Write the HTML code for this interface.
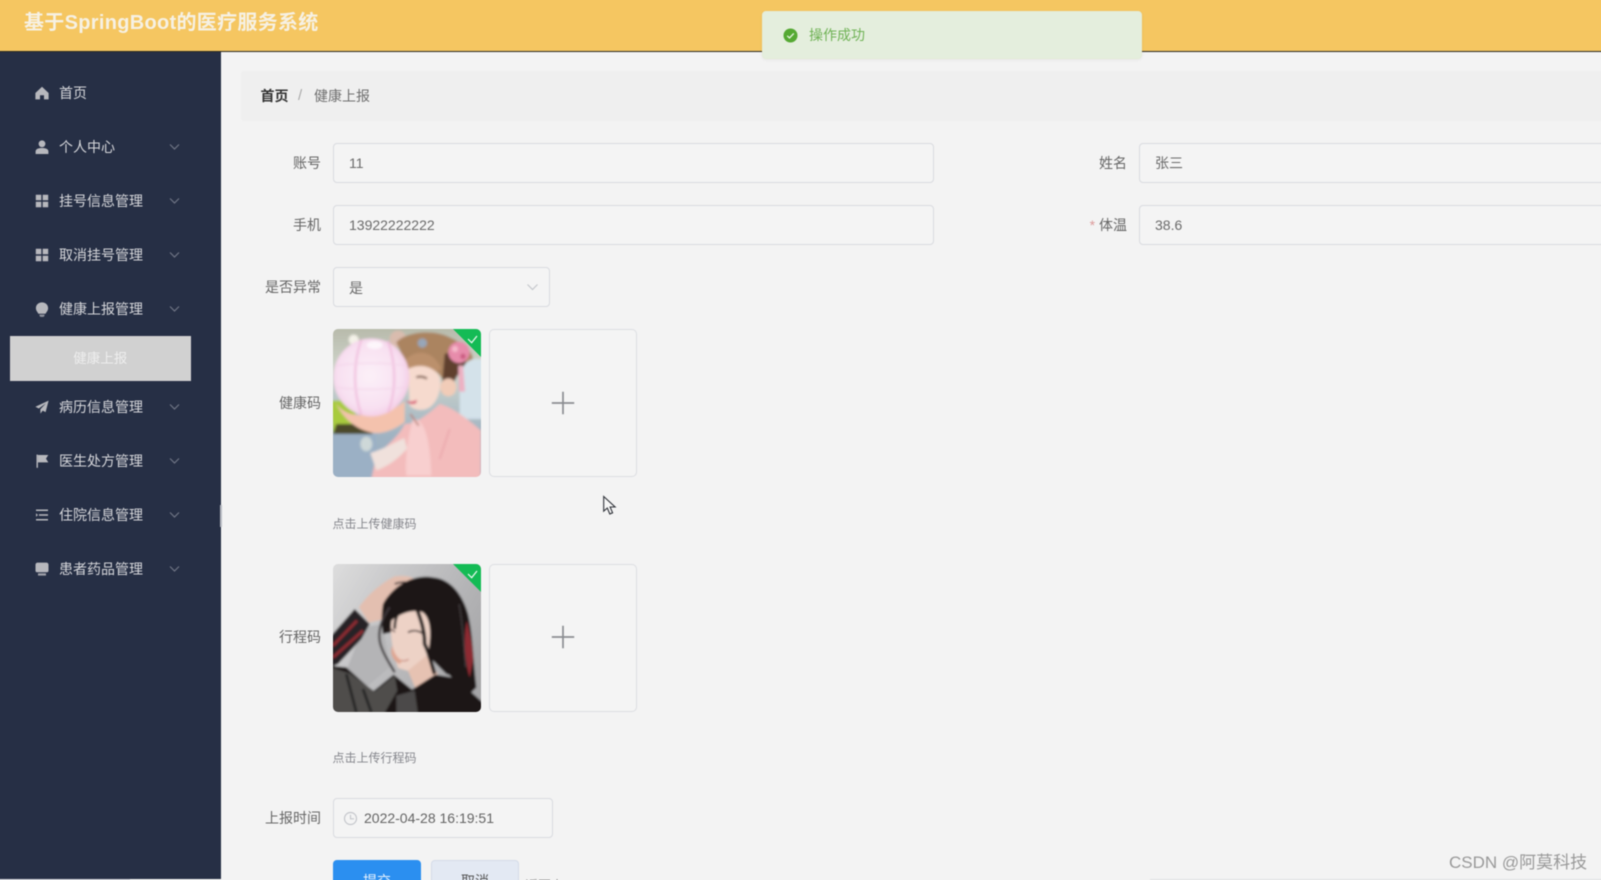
<!DOCTYPE html>
<html lang="zh-CN">
<head>
<meta charset="utf-8">
<title>基于SpringBoot的医疗服务系统</title>
<style>
*{box-sizing:border-box}
html,body{margin:0;padding:0;width:1601px;height:880px;overflow:hidden;background:#f3f3f3}
body{font-family:"Liberation Sans","Noto Sans CJK SC",sans-serif;font-size:14px;color:#606266;position:relative}
#wrap{position:absolute;left:-10px;top:-10px;width:1621px;height:900px;overflow:hidden;filter:blur(.42px);background:#f3f3f3}
#in{position:absolute;left:10px;top:10px;width:1601px;height:880px}
.a{position:absolute;white-space:nowrap}
.header{left:-10px;top:-10px;width:1621px;height:62px;background:#f5c661;border-bottom:1px solid #2b2a22}
.title{left:24px;top:9px;font-size:20px;line-height:29px;font-weight:bold;color:#f6f1e4;letter-spacing:.3px}
.side{left:-10px;top:52px;width:230.5px;height:827px;background:#262f45}
.mi{left:59px;font-size:14px;line-height:20px;color:#d6d7db}
.ic{left:35px;width:14px;height:14px}
.chev{left:168px;width:13px;height:8px}
.sub{left:10px;top:336px;width:180.5px;height:44.5px;background:#d1d1d1;color:#eeeeee;text-align:center;line-height:45px;font-size:13.5px}
.crumb{left:241px;top:71px;width:1370px;height:50px;background:#efefef;border-radius:3px}
.lab{font-size:14px;line-height:20px;color:#666;text-align:right;width:100px}
.inp{height:40px;border:1px solid #d9dbdf;border-radius:4px;background:#f4f4f4;color:#6a6a6a;line-height:39px;padding-left:15px;font-size:14px}
.card{width:148px;height:148px;border:1px solid #dcdee2;border-radius:5px;background:#f4f4f4}
.thumb{width:148px;height:148px;border-radius:5px;overflow:hidden;display:block}
.hint{font-size:12px;line-height:18px;color:#85868c}
</style>
</head>
<body>
<div id="wrap"><div id="in">
<div class="a header"></div>
<div class="a title">基于SpringBoot的医疗服务系统</div>
<div class="a side"></div>
<div class="a" style="left:220px;top:505px;width:1.500px;height:22px;background:#b8bbc3"></div>

<svg class="a ic" style="top:86px" viewBox="0 0 14 14"><path d="M7 .8 13.600 7v6.400H9V9.200H5v4.200H.4V7z" fill="#b7b8bd"/></svg>
<div class="a mi" style="top:83px">首页</div>

<svg class="a ic" style="top:140px" viewBox="0 0 14 14"><circle cx="7" cy="3.800" r="3.400" fill="#b7b8bd"/><path d="M.6 14v-2.600C.6 9.200 3 8 7 8s6.400 1.200 6.400 3.400V14z" fill="#b7b8bd"/></svg>
<div class="a mi" style="top:137px">个人中心</div>
<svg class="a chev" style="top:143px" viewBox="0 0 13 8"><path d="M2 1.500 6.500 6 11 1.500" fill="none" stroke="#6f7585" stroke-width="1.200"/></svg>

<svg class="a ic" style="top:194px" viewBox="0 0 14 14"><path d="M.8.8h5.500v5.500H.8zM7.700.8h5.500v5.500H7.700zM.8 7.700h5.500v5.500H.8zM7.700 7.700h5.500v5.500H7.700z" fill="#b7b8bd"/></svg>
<div class="a mi" style="top:191px">挂号信息管理</div>
<svg class="a chev" style="top:197px" viewBox="0 0 13 8"><path d="M2 1.500 6.500 6 11 1.500" fill="none" stroke="#6f7585" stroke-width="1.200"/></svg>

<svg class="a ic" style="top:248px" viewBox="0 0 14 14"><path d="M.8.8h5.500v5.500H.8zM7.700.8h5.500v5.500H7.700zM.8 7.700h5.500v5.500H.8zM7.700 7.700h5.500v5.500H7.700z" fill="#b7b8bd"/></svg>
<div class="a mi" style="top:245px">取消挂号管理</div>
<svg class="a chev" style="top:251px" viewBox="0 0 13 8"><path d="M2 1.500 6.500 6 11 1.500" fill="none" stroke="#6f7585" stroke-width="1.200"/></svg>

<svg class="a ic" style="top:302px;height:15px" viewBox="0 0 14 15"><path d="M7 .4C3.300.4.900 3 .9 6.100c0 2.600 1.700 4 2.500 5.600h7.200c.8-1.600 2.500-3 2.500-5.600C13.100 3 10.700.4 7 .4z" fill="#b7b8bd"/><path d="M4.500 12.600h5v1.300l-1 1h-3l-1-1z" fill="#8f929c"/></svg>
<div class="a mi" style="top:299px">健康上报管理</div>
<svg class="a chev" style="top:305px" viewBox="0 0 13 8"><path d="M2 1.500 6.500 6 11 1.500" fill="none" stroke="#6f7585" stroke-width="1.200"/></svg>

<div class="a sub">健康上报</div>

<svg class="a ic" style="top:400px" viewBox="0 0 14 14"><path d="M13.600.6 .4 6.800l3.400 1.700L11 3.300 5.400 9.300V13.600l2.300-3 2.900 1.500z" fill="#b7b8bd"/></svg>
<div class="a mi" style="top:397px">病历信息管理</div>
<svg class="a chev" style="top:403px" viewBox="0 0 13 8"><path d="M2 1.500 6.500 6 11 1.500" fill="none" stroke="#6f7585" stroke-width="1.200"/></svg>

<svg class="a ic" style="top:454px" viewBox="0 0 14 14"><path d="M1.500.6h1.400v13.200H1.500z" fill="#b7b8bd"/><path d="M2.900 1H13.300l-2.300 3.600 2.300 3.800H2.900z" fill="#b7b8bd"/></svg>
<div class="a mi" style="top:451px">医生处方管理</div>
<svg class="a chev" style="top:457px" viewBox="0 0 13 8"><path d="M2 1.500 6.500 6 11 1.500" fill="none" stroke="#6f7585" stroke-width="1.200"/></svg>

<svg class="a ic" style="top:508px" viewBox="0 0 14 14"><path d="M1 2.200h12M4 7h9M1 11.800h12" stroke="#b7b8bd" stroke-width="1.500" fill="none"/><path d="M1 5.300 3 7 1 8.700z" fill="#b7b8bd"/></svg>
<div class="a mi" style="top:505px">住院信息管理</div>
<svg class="a chev" style="top:511px" viewBox="0 0 13 8"><path d="M2 1.500 6.500 6 11 1.500" fill="none" stroke="#6f7585" stroke-width="1.200"/></svg>

<svg class="a ic" style="top:562px" viewBox="0 0 14 14"><path d="M2.500.6h9c1.100 0 2 .9 2 2v6.200c0 .9-.7 1.500-1.500 1.500H2c-.8 0-1.500-.6-1.500-1.500V2.600c0-1.100.9-2 2-2z" fill="#b7b8bd"/><path d="M3 11.300h8v2.300H3z" fill="#9ea0a8"/></svg>
<div class="a mi" style="top:559px">患者药品管理</div>
<svg class="a chev" style="top:565px" viewBox="0 0 13 8"><path d="M2 1.500 6.500 6 11 1.500" fill="none" stroke="#6f7585" stroke-width="1.200"/></svg>

<div class="a crumb"></div>
<div class="a" style="left:260.500px;top:86px;line-height:20px;font-weight:bold;color:#333">首页</div>
<div class="a" style="left:298px;top:86px;line-height:20px;color:#aaa;font-size:15px">/</div>
<div class="a" style="left:314px;top:86px;line-height:20px;color:#6e6e6e">健康上报</div>

<div class="a lab" style="left:221px;top:153px">账号</div>
<div class="a inp" style="left:333px;top:143px;width:601px">11</div>
<div class="a lab" style="left:1027px;top:153px">姓名</div>
<div class="a inp" style="left:1139px;top:143px;width:480px">张三</div>

<div class="a lab" style="left:221px;top:215px">手机</div>
<div class="a inp" style="left:333px;top:205px;width:601px">13922222222</div>
<div class="a lab" style="left:1027px;top:215px"><span style="color:#dc9a9a">*</span> 体温</div>
<div class="a inp" style="left:1139px;top:205px;width:480px">38.6</div>

<div class="a lab" style="left:221px;top:277px">是否异常</div>
<div class="a inp" style="left:333px;top:267px;width:217px;line-height:40px">是</div>
<svg class="a" style="left:526px;top:283px" width="13" height="9" viewBox="0 0 13 9"><path d="M1.500 1.500 6.500 6.500 11.500 1.500" fill="none" stroke="#c5c7cc" stroke-width="1.200"/></svg>

<div class="a lab" style="left:221px;top:393px">健康码</div>
<svg class="a thumb" style="left:333px;top:329px" viewBox="0 0 444 444">
<defs>
<linearGradient id="g1" x1="0" y1="0" x2="0" y2="1"><stop offset="0" stop-color="#b4b6a6"/><stop offset=".3" stop-color="#cfd6cc"/><stop offset=".7" stop-color="#a0b3c2"/><stop offset="1" stop-color="#93aac2"/></linearGradient>
<radialGradient id="g2" cx=".48" cy=".48" r=".56"><stop offset="0" stop-color="#fbf0f8"/><stop offset=".75" stop-color="#f8e0f1"/><stop offset="1" stop-color="#f2c9e3"/></radialGradient>
<linearGradient id="g3" x1="0" y1="0" x2="1" y2=".6"><stop offset="0" stop-color="#e0e0e0"/><stop offset=".5" stop-color="#c0c0c2"/><stop offset="1" stop-color="#a5a5a7"/></linearGradient>
<filter id="b1"><feGaussianBlur stdDeviation="4"/></filter>
<filter id="b2"><feGaussianBlur stdDeviation="2.800"/></filter>
</defs>
<g filter="url(#b1)">
<rect x="-20" y="-20" width="484" height="484" fill="url(#g1)"/>
<circle cx="62" cy="32" r="15" fill="#f4f2e8"/>
<path d="M380 90h70v180h-70z" fill="#d4e2ea"/>
<path d="M-10 215h65l25 80-80 20z" fill="#a8cb3e"/>
<path d="M10 285h80l30 30H0z" fill="#4b4a2a"/>
<path d="M0 315h130v135H0z" fill="#9bb0c5"/>
<ellipse cx="100" cy="345" rx="18" ry="22" fill="#ced8d8"/>
<circle cx="195" cy="30" r="25" fill="#d9bcae"/>
<path d="M190 40C220 8 300 0 350 25c40 18 68 40 70 65-20 8-30 18-40 35l-35 60-20-40C300 110 250 90 215 95z" fill="#ab8461"/>
<path d="M335 75c20-10 50-5 65 25l-30 45-20 40-25 5z" fill="#5e3f2e"/>
<path d="M215 95c30-35 85-35 110 25l-20 10C280 105 250 110 225 125z" fill="#bb906c"/>
<circle cx="268" cy="42" r="14" fill="#98a6b8"/>
<path d="M225 120c35-18 80-8 95 25 6 30-4 72-30 90-20 12-45 10-60-5z" fill="#f6dace"/>
<ellipse cx="346" cy="175" rx="24" ry="27" fill="#f1ccb8"/>
<path d="M320 225c40 10 90 50 124 80v145H115l15-70c30-30 70-60 85-95 30 0 60-20 105-60z" fill="#f3bcbc"/>
<path d="M240 270c30 0 50 40 55 170h-75c-5-50 5-120 20-170z" fill="#f8cfcf"/>
<path d="M232 255l25 35" stroke="#b77f76" stroke-width="5" fill="none"/>
<path d="M350 300l-30 90" stroke="#e79aa2" stroke-width="3" fill="none"/>
<path d="M8 222c20 30 55 40 90 35 45 0 85-15 117-40v62c-25 20-60 35-90 33-45-5-90-35-117-90z" fill="#f4c2ad"/>
<path d="M112 372c35-10 70-30 102-45l8 32c-25 30-60 55-92 65z" fill="#f0e1dc"/>
<ellipse cx="115" cy="145" rx="114" ry="117" fill="url(#g2)"/>
<path d="M85 32c-25 70-25 155 0 225M165 36c25 70 25 150 0 215" stroke="#f0bcdc" stroke-width="6" fill="none"/>
<path d="M10 110c70-10 140-10 210 0M5 175c70 8 140 8 215 0" stroke="#f3d2e8" stroke-width="3" fill="none"/>
<ellipse cx="125" cy="48" rx="24" ry="12" fill="#fdf6fb"/>
<circle cx="378" cy="70" r="32" fill="#e78cab"/>
<circle cx="366" cy="60" r="9" fill="#f5bacb"/><circle cx="390" cy="82" r="8" fill="#c9587f"/>
<path d="M376 110h14l6 78h-18z" fill="#edb0c2"/>
<path d="M218 214c12 6 24 4 34-2l-2 10c-10 6-24 4-32-8z" fill="#d9617a"/>
<path d="M250 145c10-4 24-2 32 4" stroke="#6b4636" stroke-width="6" fill="none"/>
</g>
<path d="M360 0h84v84z" fill="#14bb55"/>
<path d="M405 30l11 11 16-20" fill="none" stroke="#eef9f2" stroke-width="3.600"/>
</svg>
<div class="a card" style="left:489px;top:329px"></div>
<svg class="a" style="left:551px;top:391px" width="24" height="24" viewBox="0 0 24 24"><path d="M12 .8v22.400M.8 12h22.400" stroke="#8b8d91" stroke-width="1.700"/></svg>
<svg class="a" style="left:602px;top:495px" width="16" height="21" viewBox="0 0 16 21"><path d="M1.700 1.500V16.200l3.600-3.200 2.500 6 2.800-1.200-2.500-5.800h5z" fill="#f6f6f6" stroke="#30333a" stroke-width="1.100"/></svg>
<div class="a hint" style="left:332.500px;top:515px">点击上传健康码</div>

<div class="a lab" style="left:221px;top:627px">行程码</div>
<svg class="a thumb" style="left:333px;top:563.500px" viewBox="0 0 444 444">
<g filter="url(#b2)">
<rect x="-20" y="-20" width="484" height="484" fill="url(#g3)"/>
<path d="M90 190l60-10 20 130-70 60-60-50z" fill="#b4b4b6"/>
<path d="M78 130c20-30 55-65 105-92 30-6 60 0 68 14l-8 44-60 22-40 50-35 8z" fill="#e3bfb0"/>
<path d="M185 60c20-8 40-6 65 0M175 95c20-6 40-8 62-8" stroke="#3e3033" stroke-width="5" fill="none"/>
<path d="M-10 220l75-85 45 45-25 45-70 75-25 10z" fill="#272325"/>
<path d="M0 245l72-75M0 280l90-80" stroke="#8b2c31" stroke-width="9" fill="none"/>
<path d="M150 120c30-55 90-90 150-80 55 5 90 55 105 110 15 60 15 135 25 220l-20 20c-20-20-50-45-80-75-20-30-15-90-30-130-15-30-40-45-70-40-30 4-50 30-55 60l-25 5c-5-30-5-60 0-90z" fill="#1c1719"/>
<path d="M280 130 395 150 415 350 340 330 285 275z" fill="#1c1719"/>
<path d="M175 170c30-25 70-35 95-25 25 20 25 70 15 125-10 30-30 45-55 52l-35-10c-15-45-25-100-20-142z" fill="#edd2c6"/>
<path d="M225 320l55-45 35 55-65 50z" fill="#e6c2b2"/>
<path d="M178 245c4 20 14 38 30 45l-8 10c-22-10-30-35-22-55z" fill="#dfa692"/>
<path d="M225 205c15-8 30-6 46 4" stroke="#2f2020" stroke-width="5" fill="none"/>
<path d="M160 198c8-4 18-2 26 6" stroke="#2f2020" stroke-width="4" fill="none"/>
<path d="M205 290c10 2 16 0 22-4" stroke="#c27d72" stroke-width="3" fill="none"/>
<path d="M250 130c15 40 25 70 25 110 15 30 20 60 30 90" stroke="#1c1719" stroke-width="11" fill="none"/>
<path d="M170 130c-20 30-35 60-30 100 5 30 25 60 45 95" stroke="#3b3537" stroke-width="7" fill="none"/>
<path d="M205 130c-15 25-20 40-20 65" stroke="#1c1719" stroke-width="8" fill="none"/>
<path d="M-10 305l50 5 80 72 62-50 55 45 70-45 60 10 90 80v40H-10z" fill="#1b1819"/>
<path d="M-10 310l60 18 75 55 60-48 8 45-40 70H-10z" fill="#4f4e4c"/>
<path d="M40 330l30 115M90 375l25 70" stroke="#242223" stroke-width="8" fill="none"/>
<path d="M190 395l55-15 10 70h-65z" fill="#4c4a49"/>
<path d="M402 170c8 40 20 80 18 120l-10 50c-12-40-22-110-8-170z" fill="#8e2b32"/>
<path d="M378 120c12 60 15 130 20 190" stroke="#4a4446" stroke-width="3" fill="none"/>
</g>
<path d="M360 0h84v84z" fill="#14bb55"/>
<path d="M405 30l11 11 16-20" fill="none" stroke="#eef9f2" stroke-width="3.600"/>
</svg>
<div class="a card" style="left:489px;top:563.500px"></div>
<svg class="a" style="left:551px;top:625px" width="24" height="24" viewBox="0 0 24 24"><path d="M12 .8v22.400M.8 12h22.400" stroke="#8b8d91" stroke-width="1.700"/></svg>
<div class="a hint" style="left:332.500px;top:749px">点击上传行程码</div>

<div class="a lab" style="left:221px;top:808px">上报时间</div>
<div class="a inp" style="left:333px;top:798px;width:220px;padding-left:30px;color:#646464">2022-04-28 16:19:51</div>
<svg class="a" style="left:343px;top:811px" width="15" height="15" viewBox="0 0 15 15"><circle cx="7.500" cy="7.500" r="6" fill="none" stroke="#c4c6cb" stroke-width="1.200"/><path d="M7.500 3.800V7.800H11" fill="none" stroke="#c4c6cb" stroke-width="1.100"/></svg>

<div class="a" style="left:333px;top:860px;width:88px;height:40px;background:#2b8ff0;border-radius:4px;color:#eaf3fd;text-align:center;line-height:42px">提交</div>
<div class="a" style="left:431px;top:860px;width:88px;height:40px;background:#e3e9f3;border:1px solid #d4dbe8;border-radius:4px;color:#555;text-align:center;line-height:40px">取消</div>
<div class="a" style="left:525px;top:875.500px;line-height:20px;color:#9a9a9a;font-size:13px">返回上一</div>
<div class="a" style="left:1150px;top:878.500px;width:461px;height:1.500px;background:#dfe0e2"></div>
<div class="a" style="left:-10px;top:879px;width:140px;height:11px;background:#d8dadf"></div>

<div class="a" style="left:762px;top:11px;width:380px;height:48px;background:#e4eedd;border:1px solid #e4ecd8;border-radius:4px;box-shadow:0 1px 3px rgba(0,0,0,.06)"></div>
<svg class="a" style="left:783px;top:27.500px" width="15" height="15" viewBox="0 0 15 15"><circle cx="7.500" cy="7.500" r="7" fill="#55a933"/><path d="M4.200 7.800 6.500 10 10.800 5.400" fill="none" stroke="#e9f4e2" stroke-width="1.300"/></svg>
<div class="a" style="left:809px;top:25px;line-height:20px;color:#6fb255">操作成功</div>

<div class="a" style="left:1449px;top:851px;font-size:17px;line-height:24px;color:#999">CSDN @阿莫科技</div>
</div></div>
</body>
</html>
